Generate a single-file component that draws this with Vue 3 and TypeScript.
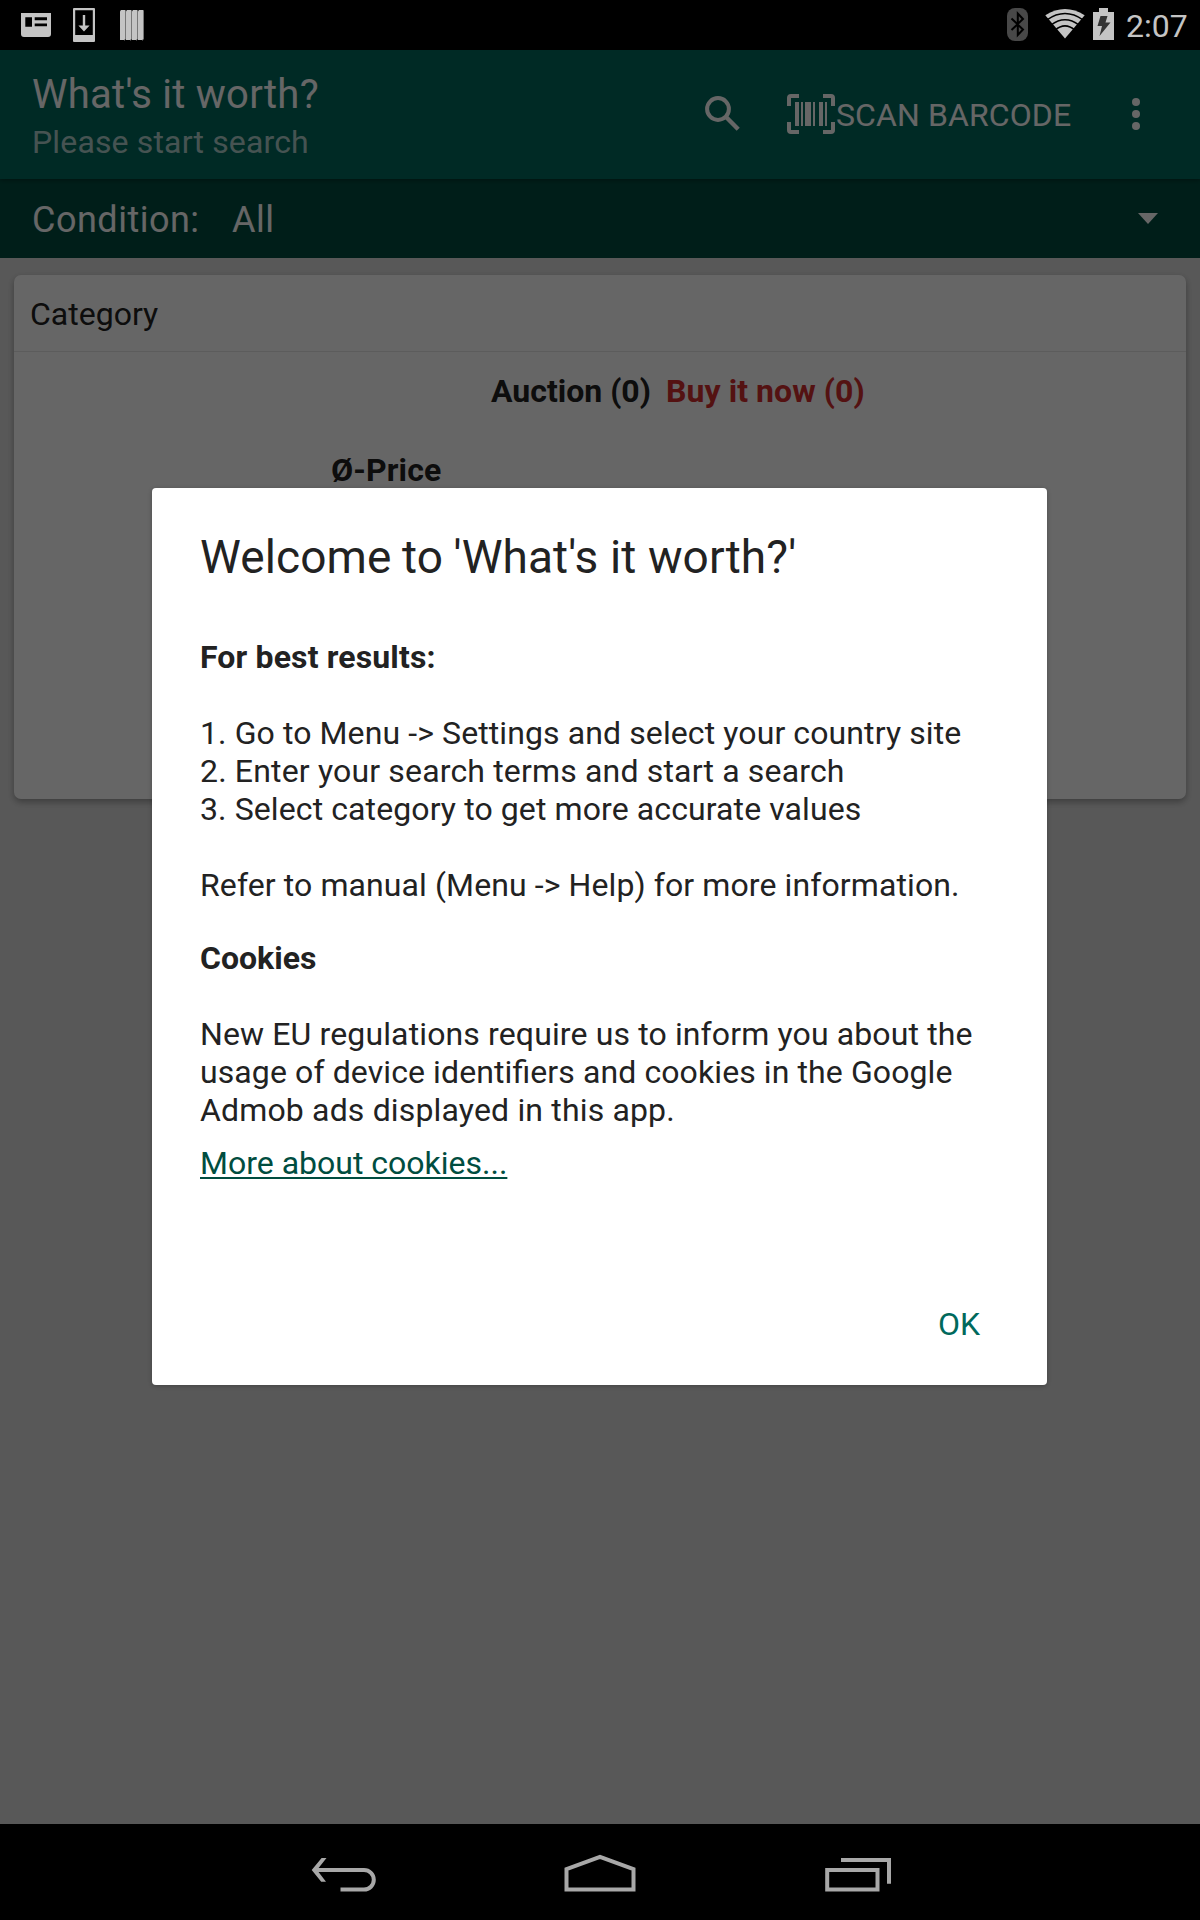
<script setup lang="ts">
interface Line {
  text: string
  spacing: string
}

const steps: Line[] = [
  { text: '1. Go to Menu -> Settings and select your country site', spacing: '0.1px' },
  { text: '2. Enter your search terms and start a search', spacing: '0.165px' },
  { text: '3. Select category to get more accurate values', spacing: '0.1px' },
]

const cookieLines: Line[] = [
  { text: 'New EU regulations require us to inform you about the', spacing: '0.13px' },
  { text: 'usage of device identifiers and cookies in the Google', spacing: '0.1px' },
  { text: 'Admob ads displayed in this app.', spacing: '0.16px' },
]
</script>

<template>
  <div class="screen">
    <header class="status">
      <div class="status-left">
        <svg class="i-news" width="30" height="24" viewBox="0 0 30 24">
          <path fill="#c4c4c4" fill-rule="evenodd" d="M0 0H30V21Q30 24 27 24H3Q0 24 0 21ZM4.3 4.3V13.7H11V4.3ZM13.7 4.3V7.2H26V4.3ZM13.7 10.4V13.3H26V10.4Z" />
        </svg>
        <svg class="i-down" width="22" height="34" viewBox="0 0 22 34">
          <path fill="#c4c4c4" fill-rule="evenodd" d="M1 0H21Q22 0 22 1V33Q22 34 21 34H1Q0 34 0 33V1Q0 0 1 0ZM2.2 2.2V27H19.8V2.2Z" />
          <path fill="#c4c4c4" d="M9.8 7H12.2V17.5H16.6L11 23.5L5.4 17.5H9.8Z" />
        </svg>
        <svg class="i-bars" width="24" height="31" viewBox="0 0 24 31">
          <g v-for="n in 4" :key="n" :transform="`translate(${(n - 1) * 6} 0)`">
            <path fill="#777" d="M4 1L6 0V29L4 31Z" />
            <path fill="#c4c4c4" d="M0 1.2L1 0H5V29L4 30H0Z" />
          </g>
        </svg>
      </div>
      <div class="status-right">
        <svg width="21" height="33" viewBox="0 0 21 33">
          <rect width="21" height="33" rx="8" fill="#484848" />
          <path d="M4.5 10.5L16 21.5L10.8 27V5.5L16 11L4.5 22" fill="none" stroke="#000" stroke-width="2" />
        </svg>
        <svg class="i-wifi" width="40" height="30" viewBox="0 0 40 30">
          <path fill="#c4c4c4" d="M20 29.5L0.3 6.2Q20 -6 39.7 6.2Z" />
          <g fill="none" stroke="#000" stroke-width="1.5">
            <path d="M2 10.8Q20 -1.8 38 10.8" />
            <path d="M6 16Q20 5.4 34 16" />
            <path d="M10 21.2Q20 12.6 30 21.2" />
          </g>
        </svg>
        <svg class="i-batt" width="21" height="32" viewBox="0 0 21 32">
          <path fill="#c4c4c4" d="M6 0H15V4H21V32H0V4H6Z" />
          <path fill="#333" d="M7.5 8H14.5L12.5 14.5H17.5L6.5 28L9 18H4.5Z" />
        </svg>
        <span class="clock">2:07</span>
      </div>
    </header>

    <div class="appbar">
      <div class="titles">
        <div class="title">What's it worth?</div>
        <div class="subtitle">Please start search</div>
      </div>
      <svg class="i-search" width="36" height="36" viewBox="0 0 36 36">
        <circle cx="13" cy="13" r="10.9" fill="none" stroke="#fff" stroke-width="4" />
        <path d="M21.3 21.3L33.2 33.2" stroke="#fff" stroke-width="4.4" />
      </svg>
      <svg class="i-scan" width="48" height="40" viewBox="0 0 48 40">
        <path fill="none" stroke="#fff" stroke-width="4" d="M12 2H4Q2 2 2 4V12M36 2H44Q46 2 46 4V12M12 38H4Q2 38 2 36V28M36 38H44Q46 38 46 36V28" />
        <path fill="#fff" d="M8 8H12V32H8ZM14 8H16V32H14ZM18 8H24V32H18ZM26 8H28V32H26ZM32 8H36V32H32ZM38 8H40V32H38Z" />
      </svg>
      <span class="scan">SCAN BARCODE</span>
      <svg class="i-more" width="8" height="32" viewBox="0 0 8 32">
        <circle v-for="cy in [4, 16, 28]" :key="cy" cx="4" :cy="cy" r="4" fill="#fff" />
      </svg>
    </div>

    <div class="condition">
      <span class="cond-label">Condition:</span>
      <span class="cond-value">All</span>
      <svg class="i-caret" width="20" height="11" viewBox="0 0 20 11"><path fill="#fff" d="M0 0H20L10 11Z" /></svg>
    </div>

    <main class="content">
      <section class="card">
        <div class="category"><span>Category</span></div>
        <div class="counts"><span class="auction">Auction (0)</span><span class="buy">Buy it now (0)</span></div>
        <div class="price"><span>Ø-Price</span></div>
      </section>
    </main>

    <div class="scrim">
      <div class="dialog" role="dialog">
        <h1>Welcome <span class="to">to</span> 'What's it worth?'</h1>
        <h2 class="best"><span>For best results:</span></h2>
        <div class="steps">
          <div v-for="l in steps" :key="l.text"><span :style="{ letterSpacing: l.spacing }">{{ l.text }}</span></div>
        </div>
        <div class="refer"><span>Refer to manual (Menu -> Help) for more information.</span></div>
        <h2 class="cookies"><span>Cookies</span></h2>
        <div class="eu">
          <div v-for="l in cookieLines" :key="l.text"><span :style="{ letterSpacing: l.spacing }">{{ l.text }}</span></div>
        </div>
        <div class="more"><a>More about cookies...</a></div>
        <div class="actions"><span>OK</span></div>
      </div>
    </div>

    <nav class="navbar">
      <svg class="i-back" width="65" height="38" viewBox="0 0 65 38">
        <path fill="none" stroke="#a8a8a8" stroke-width="4" d="M5 14H53A9.8 9.8 0 0 1 53 33.6H29.5" />
        <path fill="#a8a8a8" d="M10.6 2H15.5L6 14L15 25.7H10.2L0.7 14Z" />
      </svg>
      <svg class="i-home" width="72" height="38" viewBox="0 0 72 38">
        <path fill="none" stroke="#a8a8a8" stroke-width="4" d="M2.5 33.6V13.2L36 0.8L69.5 13.2V33.6Z" />
      </svg>
      <svg class="i-recent" width="67" height="38" viewBox="0 0 67 38">
        <path fill="none" stroke="#a8a8a8" stroke-width="4" d="M2.2 14H52.5V33.6H2.2Z" />
        <path fill="none" stroke="#a8a8a8" stroke-width="4" d="M16 4H64V27.7" />
      </svg>
    </nav>
  </div>
</template>

<style>
body {
  background: #000;
}
</style>

<style scoped>
.screen {
  position: relative;
  display: flex;
  flex-direction: column;
  width: 1200px;
  height: 1920px;
  overflow: hidden;
  background: #ddd;
  color: #222;
  font-family: Roboto, sans-serif;
  font-size: 32px;
  line-height: 38px;
  font-feature-settings: "liga" 1;
  white-space: nowrap;
}
svg {
  display: block;
  flex: none;
  overflow: visible;
}
.status {
  display: flex;
  justify-content: space-between;
  height: 50px;
  background: #000;
}
.status-left {
  display: flex;
  align-items: flex-start;
  padding-left: 21px;
}
.i-news { margin-top: 13px; }
.i-down { margin: 8px 25px 0 22px; }
.i-bars { margin-top: 10px; }
.status-right {
  display: flex;
  align-items: flex-start;
  padding: 8px 12px 0 0;
}
.i-wifi { margin: 1px 8px 0 17px; }
.clock {
  width: 62px;
  margin: -1px 0 0 12px;
  color: #c4c4c4;
}
.appbar {
  position: relative;
  display: flex;
  align-items: center;
  box-sizing: border-box;
  height: 129px;
  padding: 0 0 1px 32px;
  background: #00695c;
  color: #fff;
  box-shadow: 0 1px 5px rgba(0, 0, 0, 0.4);
}
.titles {
  width: 673px;
  padding-top: 3px;
}
.title {
  font-size: 40px;
  line-height: 47px;
  letter-spacing: 0.27px;
}
.subtitle {
  margin-top: 5px;
  color: rgba(255, 255, 255, 0.7);
  letter-spacing: 0.15px;
}
.i-scan { margin-left: 46px; }
.scan {
  width: 236px;
  margin-left: 1px;
  padding-top: 1px;
  letter-spacing: 0.1px;
}
.i-more { margin-left: 60px; }
.condition {
  display: flex;
  align-items: center;
  box-sizing: border-box;
  height: 79px;
  padding: 0 0 1px 32px;
  background: #004d40;
  color: #fff;
  font-size: 36px;
  line-height: 44px;
  letter-spacing: 0.5px;
}
.cond-label {
  width: 200px;
  padding-top: 4px;
}
.cond-value {
  flex: 1;
  padding-top: 4px;
}
.i-caret { margin-right: 42px; }
.content {
  flex: 1;
  padding: 17px 14px 0;
}
.card {
  height: 524px;
  border-radius: 7px;
  background: #fff;
  box-shadow: 0 3px 7px rgba(0, 0, 0, 0.32);
}
.category {
  height: 56px;
  padding: 20px 0 0 16px;
  border-bottom: 1px solid #e6e6e6;
}
.counts {
  display: flex;
  gap: 15px;
  padding: 20px 0 0 477px;
  font-weight: 700;
}
.buy {
  color: #d32f2f;
  letter-spacing: 0.07px;
}
.price {
  padding: 41px 0 0 317px;
  font-weight: 700;
  letter-spacing: 0.15px;
}
.scrim {
  position: absolute;
  inset: 50px 0 96px;
  display: flex;
  align-items: flex-start;
  padding: 438px 0 0 152px;
  background: rgba(0, 0, 0, 0.6);
}
.dialog {
  box-sizing: border-box;
  width: 895px;
  height: 897px;
  padding: 42px 48px 0;
  border-radius: 4px;
  background: #fff;
  box-shadow: 0 1px 4px rgba(0, 0, 0, 0.25);
}
h1 {
  margin: 0;
  font-weight: 400;
  font-size: 46px;
  line-height: 54px;
  letter-spacing: 0.1px;
}
.to { margin: 0 -1px; }
h2 {
  margin: 0;
  font-weight: 700;
  font-size: 32px;
  line-height: 38px;
}
.best {
  margin-top: 54px;
  letter-spacing: 0.14px;
}
.steps { margin-top: 38px; }
.refer {
  margin-top: 38px;
  letter-spacing: 0.1px;
}
.cookies { margin-top: 35px; }
.eu { margin-top: 38px; }
.more { margin-top: 15px; color: #004d40; }
.more a {
  text-decoration: underline;
  text-decoration-thickness: 2px;
  text-underline-offset: 3px;
  text-decoration-skip-ink: none;
}
.actions {
  margin-top: 123px;
  padding-right: 19px;
  text-align: right;
  color: #00695c;
}
.navbar {
  display: flex;
  align-items: flex-start;
  box-sizing: border-box;
  height: 96px;
  padding: 32px 0 0 311px;
  background: #000;
}
.i-home { margin-left: 188px; }
.i-recent { margin-left: 189px; }
</style>
